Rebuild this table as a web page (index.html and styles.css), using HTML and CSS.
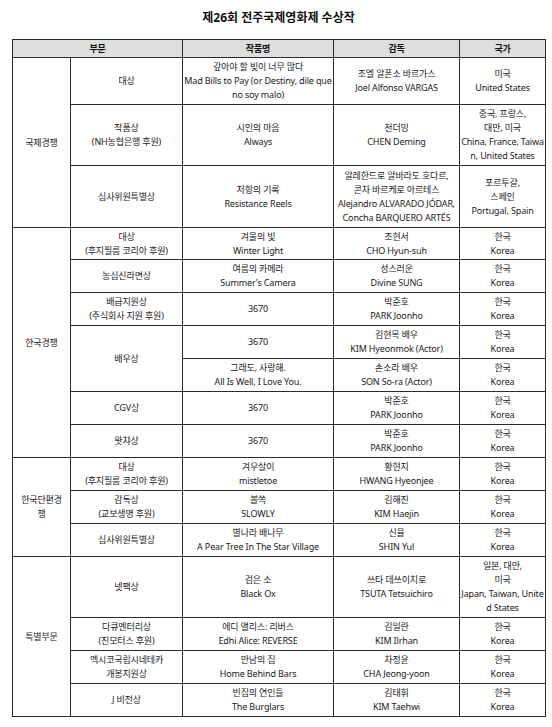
FILE: index.html
```html
<!DOCTYPE html>
<html lang="ko">
<head>
<meta charset="utf-8">
<title>제26회 전주국제영화제 수상작</title>
<link rel="stylesheet" href="styles.css">
</head>
<body>
<div class="page">
  <h1 class="title">제26회 전주국제영화제 수상작</h1>
  <table class="awards">
    <colgroup>
      <col class="c1"><col class="c2"><col class="c3"><col class="c4"><col class="c5">
    </colgroup>
    <thead>
      <tr class="h18">
        <th colspan="2">부문</th><th>작품명</th><th>감독</th><th>국가</th>
      </tr>
    </thead>
    <tbody>
      <tr class="h47">
        <td rowspan="3">국제경쟁</td>
        <td>대상</td>
        <td>갚아야 할 빚이 너무 많다<br>Mad Bills to Pay (or Destiny, dile que<br>no soy malo)</td>
        <td>조엘 알폰소 바르가스<br>Joel Alfonso VARGAS</td>
        <td>미국<br>United States</td>
      </tr>
      <tr class="h61">
        <td>작품상<br>(NH농협은행 후원)</td>
        <td>시인의 마음<br>Always</td>
        <td>천더밍<br>CHEN Deming</td>
        <td>중국, 프랑스,<br>대만, 미국<br>China, France, Taiwa<br>n, United States</td>
      </tr>
      <tr class="h62">
        <td>심사위원특별상</td>
        <td>저항의 기록<br>Resistance Reels</td>
        <td>알레한드로 알바라도 호다르,<br>콘차 바르케로 아르테스<br>Alejandro ALVARADO JÓDAR,<br>Concha BARQUERO ARTÉS</td>
        <td>포르투갈,<br>스페인<br>Portugal, Spain</td>
      </tr>

      <tr class="h32">
        <td rowspan="7">한국경쟁</td>
        <td>대상<br>(후지필름 코리아 후원)</td>
        <td>겨울의 빛<br>Winter Light</td>
        <td>조현서<br>CHO Hyun-suh</td>
        <td>한국<br>Korea</td>
      </tr>
      <tr class="h33">
        <td>농심신라면상</td>
        <td>여름의 카메라<br>Summer's Camera</td>
        <td>성스러운<br>Divine SUNG</td>
        <td>한국<br>Korea</td>
      </tr>
      <tr class="h33">
        <td>배급지원상<br>(주식회사 지원 후원)</td>
        <td>3670</td>
        <td>박준호<br>PARK Joonho</td>
        <td>한국<br>Korea</td>
      </tr>
      <tr class="h33">
        <td rowspan="2">배우상</td>
        <td>3670</td>
        <td>김현목 배우<br>KIM Hyeonmok (Actor)</td>
        <td>한국<br>Korea</td>
      </tr>
      <tr class="h33">
        <td>그래도, 사랑해.<br>All Is Well, I Love You.</td>
        <td>손소라 배우<br>SON So-ra (Actor)</td>
        <td>한국<br>Korea</td>
      </tr>
      <tr class="h33">
        <td>CGV상</td>
        <td>3670</td>
        <td>박준호<br>PARK Joonho</td>
        <td>한국<br>Korea</td>
      </tr>
      <tr class="h33">
        <td>왓챠상</td>
        <td>3670</td>
        <td>박준호<br>PARK Joonho</td>
        <td>한국<br>Korea</td>
      </tr>

      <tr class="h33">
        <td rowspan="3">한국단편경<br>쟁</td>
        <td>대상<br>(후지필름 코리아 후원)</td>
        <td>겨우살이<br>mistletoe</td>
        <td>황현지<br>HWANG Hyeonjee</td>
        <td>한국<br>Korea</td>
      </tr>
      <tr class="h33">
        <td>감독상<br>(교보생명 후원)</td>
        <td>볼쏙<br>SLOWLY</td>
        <td>김해진<br>KIM Haejin</td>
        <td>한국<br>Korea</td>
      </tr>
      <tr class="h33">
        <td>심사위원특별상</td>
        <td>별나라 배나무<br>A Pear Tree In The Star Village</td>
        <td>신율<br>SHIN Yul</td>
        <td>한국<br>Korea</td>
      </tr>

      <tr class="h61">
        <td rowspan="4">특별부문</td>
        <td>넷팩상</td>
        <td>검은 소<br>Black Ox</td>
        <td>쓰타 데쓰이치로<br>TSUTA Tetsuichiro</td>
        <td>일본, 대만,<br>미국<br>Japan, Taiwan, Unite<br>d States</td>
      </tr>
      <tr class="h33">
        <td>다큐멘터리상<br>(진모터스 후원)</td>
        <td>에디 앨리스: 리버스<br>Edhi Alice: REVERSE</td>
        <td>김일란<br>KIM Ilrhan</td>
        <td>한국<br>Korea</td>
      </tr>
      <tr class="h33">
        <td>멕시코국립시네테카<br>개봉지원상</td>
        <td>만남의 집<br>Home Behind Bars</td>
        <td>차정윤<br>CHA Jeong-yoon</td>
        <td>한국<br>Korea</td>
      </tr>
      <tr class="h33">
        <td>J 비전상</td>
        <td>빈집의 연인들<br>The Burglars</td>
        <td>김태휘<br>KIM Taehwi</td>
        <td>한국<br>Korea</td>
      </tr>
    </tbody>
  </table>
</div>
</body>
</html>
```

FILE: styles.css
```css
html, body {
  margin: 0;
  padding: 0;
  background: #ffffff;
}

body {
  font-family: "Noto Sans", "Noto Sans CJK KR", sans-serif;
  color: #1a1a1a;
}

.page {
  padding: 0 0 0 12px;
  width: 533px;
}

.title {
  margin: 10px 0 13px 0;
  font-size: 12px;
  line-height: 16px;
  font-weight: bold;
  text-align: center;
  color: #111111;
}

.awards {
  width: 533px;
  table-layout: fixed;
  border-collapse: collapse;
  font-size: 9px;
  line-height: 14px;
  letter-spacing: -0.15px;
}

.c1 { width: 58px; }
.c2 { width: 112px; }
.c3 { width: 151px; }
.c4 { width: 126px; }
.c5 { width: 86px; }

.awards th,
.awards td {
  border: 1px solid #2b2b2b;
  padding: 0;
  text-align: center;
  vertical-align: middle;
  white-space: nowrap;
  overflow: hidden;
}

.awards th {
  background: #dedede;
  font-weight: bold;
  color: #111111;
}

.h18 { height: 18px; }
.h32 { height: 32px; }
.h33 { height: 33px; }
.h47 { height: 47px; }
.h61 { height: 61px; }
.h62 { height: 62px; }
```
